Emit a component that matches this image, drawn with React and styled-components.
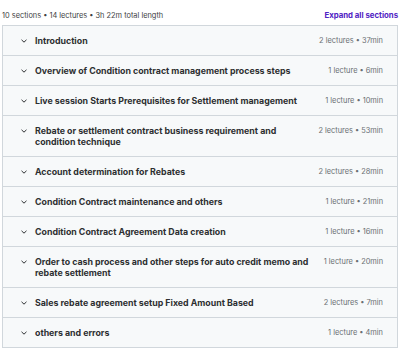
import React from "react";
import styled, { createGlobalStyle } from "styled-components";

const GlobalStyle = createGlobalStyle`
  body {
    margin: 0;
    background: #fff;
    font-family: Inter, "Noto Sans", sans-serif;
    color: #2d2f31;
  }
`;

const sections = [
  { title: "Introduction", meta: "2 lectures • 37min" },
  { title: "Overview of Condition contract management process steps", meta: "1 lecture • 6min" },
  { title: "Live session Starts Prerequisites for Settlement management", meta: "1 lecture • 10min" },
  { title: "Rebate or settlement contract business requirement and condition technique", meta: "2 lectures • 53min" },
  { title: "Account determination for Rebates", meta: "2 lectures • 28min" },
  { title: "Condition Contract maintenance and others", meta: "1 lecture • 21min" },
  { title: "Condition Contract Agreement Data creation", meta: "1 lecture • 16min" },
  { title: "Order to cash process and other steps for auto credit memo and rebate settlement", meta: "1 lecture • 20min" },
  { title: "Sales rebate agreement setup Fixed Amount Based", meta: "2 lectures • 7min" },
  { title: "others and errors", meta: "1 lecture • 4min" },
];

const Wrapper = styled.div`
  padding: 8px 2px 0 2px;
`;

const Header = styled.div`
  display: flex;
  justify-content: space-between;
  align-items: center;
  height: 14px;
  margin-bottom: 3px;
`;

const Summary = styled.span`
  font-size: 7.4px;
  color: #3e4143;
`;

const ExpandLink = styled.span`
  font-size: 7.8px;
  font-weight: 700;
  color: #5022c3;
`;

const List = styled.div`
  border: 1px solid #d1d7dc;
  border-bottom: none;
`;

const Row = styled.div`
  display: flex;
  align-items: flex-start;
  background: #f7f9fa;
  border-bottom: 1px solid #d1d7dc;
  padding: 9px 14px 9px 17px;
`;

const Chevron = styled.svg`
  width: 8px;
  height: 8px;
  margin-top: 2px;
  margin-right: 7px;
  flex-shrink: 0;
`;

const Title = styled.div`
  flex: 1;
  font-size: 8.8px;
  font-weight: 700;
  line-height: 11px;
  padding-right: 4px;
`;

const Meta = styled.div`
  font-size: 7.4px;
  line-height: 11px;
  color: #6a6f73;
  white-space: nowrap;
`;

export default function App() {
  return (
    <>
      <GlobalStyle />
      <Wrapper>
        <Header>
          <Summary>10 sections • 14 lectures • 3h 22m total length</Summary>
          <ExpandLink>Expand all sections</ExpandLink>
        </Header>
        <List>
          {sections.map((s) => (
            <Row key={s.title}>
              <Chevron viewBox="0 0 8 8">
                <path d="M1.5 2.8 L4 5.2 L6.5 2.8" fill="none" stroke="#2d2f31" strokeWidth="1" />
              </Chevron>
              <Title>{s.title}</Title>
              <Meta>{s.meta}</Meta>
            </Row>
          ))}
        </List>
      </Wrapper>
    </>
  );
}
